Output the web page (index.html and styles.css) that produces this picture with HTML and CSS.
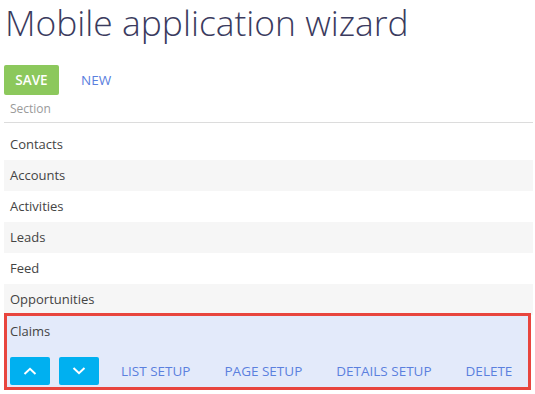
FILE: index.html
```html
<!DOCTYPE html>
<html>
<head>
    <meta charset="UTF-8">
    <title>Mobile application wizard</title>
    <link rel="stylesheet" href="styles.css">
</head>
<body>
    <h1 class="page-title">Mobile application wizard</h1>
    <div class="toolbar">
        <button class="btn-save">SAVE</button>
        <button class="btn-link">NEW</button>
    </div>
    <div class="grid-header">Section</div>
    <div class="grid">
        <div class="grid-row">Contacts</div>
        <div class="grid-row">Accounts</div>
        <div class="grid-row">Activities</div>
        <div class="grid-row">Leads</div>
        <div class="grid-row">Feed</div>
        <div class="grid-row">Opportunities</div>
        <div class="grid-row selected">
            <div class="row-caption">Claims</div>
            <div class="row-actions">
                <button class="btn-move" title="Up">
                    <svg width="14" height="8" viewBox="0 0 14 8"><path d="M1.5 7 L7 1.8 L12.5 7" fill="none" stroke="#fff" stroke-width="2"/></svg>
                </button>
                <button class="btn-move" title="Down">
                    <svg width="14" height="8" viewBox="0 0 14 8"><path d="M1.5 1 L7 6.2 L12.5 1" fill="none" stroke="#fff" stroke-width="2"/></svg>
                </button>
                <button class="btn-link">LIST SETUP</button>
                <button class="btn-link">PAGE SETUP</button>
                <button class="btn-link">DETAILS SETUP</button>
                <button class="btn-link">DELETE</button>
            </div>
        </div>
    </div>
</body>
</html>
```

FILE: styles.css
```css
body {
    font-family: "Open Sans", "Noto Sans", sans-serif;
    font-size: 13px;
    color: #444;
    margin: 0;
    padding: 0 2px 0 4px;
    background: #fff;
}

.page-title {
    font-weight: 300;
    font-size: 35.4px;
    color: #3b3b5e;
    margin: 0;
    padding: 0 0 0 1px;
    line-height: 44px;
    white-space: nowrap;
}

.toolbar {
    display: flex;
    align-items: center;
    margin-top: 21px;
    gap: 12px;
}

button {
    font-family: inherit;
    font-size: 13px;
    border: none;
    background: none;
    cursor: pointer;
    padding: 0;
    white-space: nowrap;
    flex-shrink: 0;
}

.btn-save {
    background-color: #8cc85c;
    color: #fff;
    width: 55px;
    height: 30px;
    border-radius: 2px;
    font-weight: 600;
    font-size: 13.5px;
}

.btn-link {
    color: #5b80de;
    font-size: 13.5px;
    padding: 0 10px;
}

.grid-header {
    color: #9a9a9a;
    font-size: 12px;
    padding: 5px 6px 5px;
    border-bottom: 1px solid #dcdcdc;
}

.grid {
    display: flex;
    flex-direction: column;
}

.grid-row {
    height: 31px;
    line-height: 31px;
    padding: 0 6px;
}

.grid-row:nth-child(1) {
    height: 37px;
    line-height: 42px;
}

.grid-row:nth-child(even) {
    background-color: #f6f6f6;
}

.grid-row.selected {
    height: auto;
    line-height: normal;
    background-color: #e3eafa;
    border: 3px solid #e8453e;
    margin: -2px 2px 0 0;
    padding: 0 3px;
}

.row-caption {
    padding: 6px 0 0;
    height: 30px;
    box-sizing: border-box;
}

.row-actions {
    display: flex;
    align-items: center;
    padding: 11px 0 2px 0;
}

.btn-move {
    width: 40px;
    height: 28px;
    background-color: #00b0f0;
    border-radius: 2px;
    margin-right: 9px;
    display: flex;
    align-items: center;
    justify-content: center;
}

.row-actions .btn-link {
    padding: 0;
    margin-left: 13px;
    margin-right: 21px;
}

.row-actions .btn-link:last-child {
    margin-right: 0;
}
```
